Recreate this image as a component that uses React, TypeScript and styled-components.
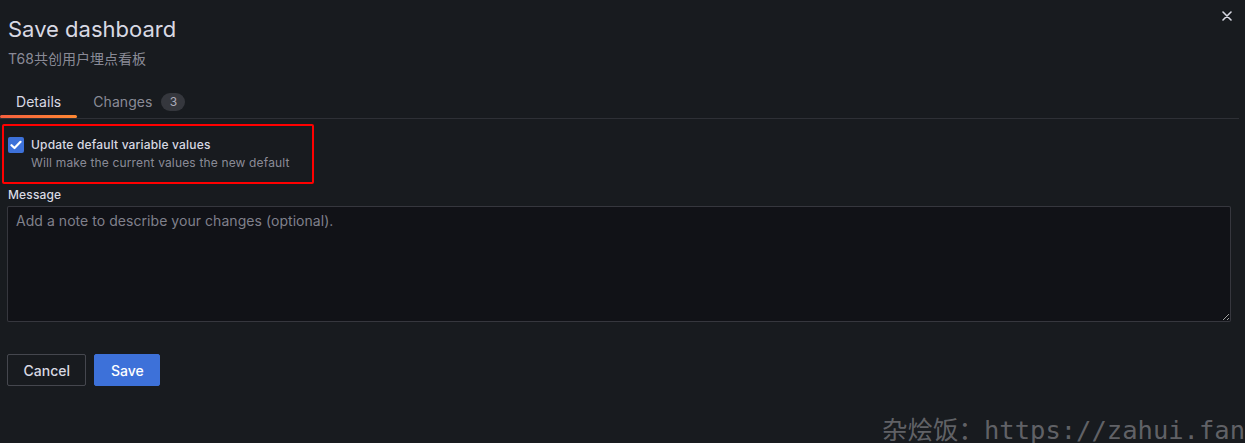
import React from "react";
import styled, { createGlobalStyle } from "styled-components";

const Global = createGlobalStyle`
  html, body { margin: 0; padding: 0; background: #181b1f; }
  body { font-family: Inter, "Noto Sans CJK SC", sans-serif; color: #ccccdc; width: 1245px; height: 443px; overflow: hidden; }
  * { box-sizing: border-box; }
`;

const Page = styled.div`
  position: relative;
  width: 1245px;
  height: 443px;
  background: #181b1f;
  padding: 13px 14px 0 7px;
`;

const Header = styled.div`
  display: flex;
  justify-content: space-between;
  align-items: flex-start;
`;

const Title = styled.h1`
  margin: 0 0 0 1px;
  font-size: 22px;
  font-weight: 400;
  line-height: 33px;
  color: #d8d9e3;
`;

const Close = styled.button`
  background: none;
  border: none;
  padding: 0;
  margin: -2px -1px 0 0;
  width: 10px;
  height: 10px;
  color: #d8d9e3;
  display: flex;
`;

const Subtitle = styled.div`
  margin: 3px 0 0 1px;
  font-size: 14px;
  line-height: 20px;
  color: rgba(204, 204, 220, 0.65);
`;

const TabBar = styled.div`
  display: flex;
  margin: 16px -8px 0 -7px;
  border-bottom: 1px solid rgba(204, 204, 220, 0.12);
`;

const Tab = styled.div<{ $active?: boolean }>`
  position: relative;
  display: flex;
  align-items: center;
  gap: 9px;
  height: 33px;
  padding: 0 16px;
  font-size: 14px;
  letter-spacing: 0.05px;
  color: ${(p) => (p.$active ? "#d8d9e3" : "rgba(204,204,220,0.65)")};
  &::after {
    content: "";
    display: ${(p) => (p.$active ? "block" : "none")};
    position: absolute;
    left: 0;
    right: 0;
    bottom: 0;
    height: 3px;
    border-radius: 2px;
    background: linear-gradient(90deg, #f55f3e 0%, #ff8833 100%);
  }
`;

const Badge = styled.span`
  display: inline-flex;
  align-items: center;
  justify-content: center;
  min-width: 24px;
  height: 18px;
  padding: 0 6px;
  border-radius: 9px;
  background: rgba(204, 204, 220, 0.16);
  color: rgba(204, 204, 220, 0.8);
  font-size: 12px;
`;

const Highlight = styled.div`
  margin: 5px 0 0 -5px;
  width: 312px;
  height: 60px;
  border: 2px solid #ff0000;
  border-radius: 2px;
  padding: 10px 0 0 4px;
  display: flex;
  gap: 7px;
`;

const Check = styled.span`
  width: 16px;
  height: 16px;
  border-radius: 2px;
  background: #3d71d9;
  display: flex;
  align-items: center;
  justify-content: center;
  flex-shrink: 0;
  margin-top: 1px;
`;

const CheckText = styled.div`
  display: flex;
  flex-direction: column;
`;

const CheckLabel = styled.div`
  font-size: 12px;
  font-weight: 500;
  line-height: 18px;
  letter-spacing: 0.17px;
  color: #d8d9e3;
`;

const CheckDesc = styled.div`
  font-size: 12px;
  line-height: 18px;
  letter-spacing: 0.16px;
  color: rgba(204, 204, 220, 0.65);
`;

const FieldLabel = styled.div`
  margin: 2px 0 0 1px;
  font-size: 12px;
  font-weight: 500;
  line-height: 18px;
  letter-spacing: 0.15px;
  color: #d8d9e3;
`;

const TextArea = styled.textarea`
  display: block;
  margin-top: 2px;
  width: 1224px;
  height: 116px;
  background: #111217;
  border: 1px solid rgba(204, 204, 220, 0.2);
  border-radius: 2px;
  padding: 5px 8px;
  font-family: Inter, sans-serif;
  font-size: 14px;
  line-height: 18px;
  letter-spacing: 0.05px;
  color: #ccccdc;
  resize: vertical;
  outline: none;
  &::placeholder { color: rgba(204, 204, 220, 0.6); }
`;

const Actions = styled.div`
  display: flex;
  gap: 8px;
  margin-top: 32px;
`;

const Button = styled.button<{ $primary?: boolean }>`
  height: 32px;
  padding: 0 15.5px;
  border-radius: 2px;
  font-family: Inter, sans-serif;
  font-size: 14px;
  font-weight: 500;
  color: ${(p) => (p.$primary ? "#ffffff" : "#d8d9e3")};
  background: ${(p) => (p.$primary ? "#3d71d9" : "transparent")};
  border: 1px solid ${(p) => (p.$primary ? "#3d71d9" : "rgba(204,204,220,0.25)")};
`;

const Watermark = styled.div`
  position: absolute;
  right: 0;
  bottom: -5px;
  font-family: "DejaVu Sans Mono", "Noto Sans CJK SC", monospace;
  font-size: 25.5px;
  line-height: 36px;
  color: rgba(160, 160, 165, 0.55);
  white-space: nowrap;
`;

export default function App() {
  return (
    <>
      <Global />
      <Page>
        <Header>
          <Title>Save dashboard</Title>
          <Close aria-label="Close">
            <svg width="10" height="10" viewBox="0 0 10 10">
              <path d="M1 1 L9 9 M9 1 L1 9" stroke="currentColor" strokeWidth="1.6" strokeLinecap="round" />
            </svg>
          </Close>
        </Header>
        <Subtitle>T68共创用户埋点看板</Subtitle>
        <TabBar>
          <Tab $active>Details</Tab>
          <Tab>
            Changes <Badge>3</Badge>
          </Tab>
        </TabBar>
        <Highlight>
          <Check>
            <svg width="12" height="10" viewBox="0 0 12 10">
              <path d="M1.5 5.2 L4.5 8 L10.5 1.8" fill="none" stroke="#fff" strokeWidth="2.2" strokeLinecap="round" strokeLinejoin="round" />
            </svg>
          </Check>
          <CheckText>
            <CheckLabel>Update default variable values</CheckLabel>
            <CheckDesc>Will make the current values the new default</CheckDesc>
          </CheckText>
        </Highlight>
        <FieldLabel>Message</FieldLabel>
        <TextArea placeholder="Add a note to describe your changes (optional)." />
        <Actions>
          <Button>Cancel</Button>
          <Button $primary>Save</Button>
        </Actions>
        <Watermark>杂烩饭：https://zahui.fan</Watermark>
      </Page>
    </>
  );
}
